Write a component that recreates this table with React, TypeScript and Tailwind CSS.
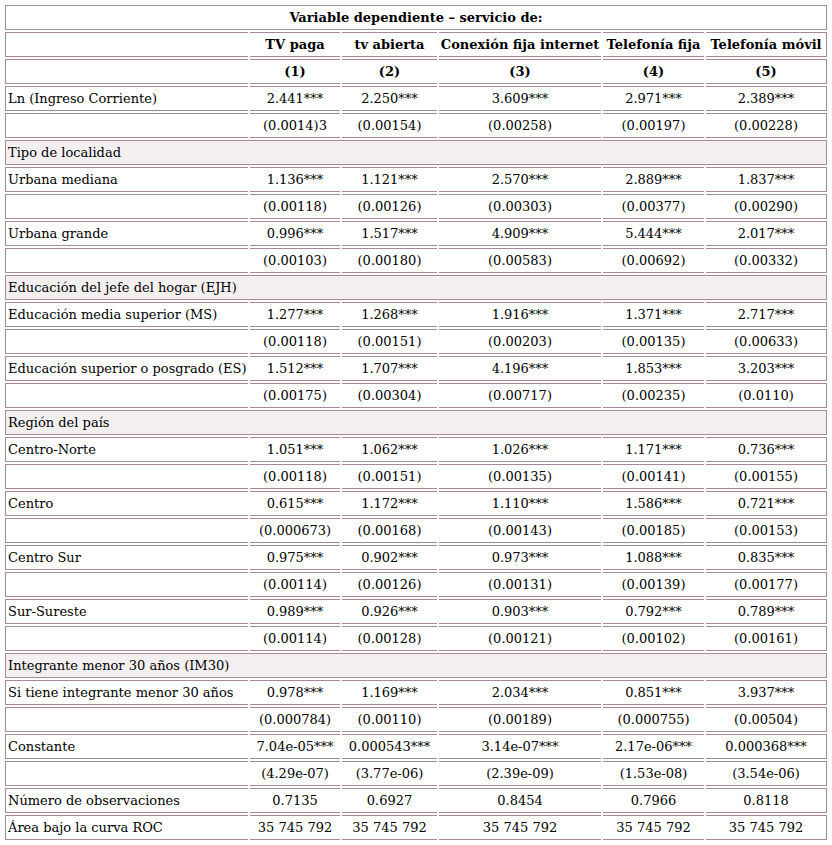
import React from "react";

type Row =
  | { kind: "section"; label: string }
  | { kind: "data"; label: string; values: string[]; bold?: boolean };

const rows: Row[] = [
  { kind: "data", label: "", values: ["TV paga", "tv abierta", "Conexión fija internet", "Telefonía fija", "Telefonía móvil"], bold: true },
  { kind: "data", label: "", values: ["(1)", "(2)", "(3)", "(4)", "(5)"], bold: true },
  { kind: "data", label: "Ln (Ingreso Corriente)", values: ["2.441***", "2.250***", "3.609***", "2.971***", "2.389***"] },
  { kind: "data", label: "", values: ["(0.0014)3", "(0.00154)", "(0.00258)", "(0.00197)", "(0.00228)"] },
  { kind: "section", label: "Tipo de localidad" },
  { kind: "data", label: "Urbana mediana", values: ["1.136***", "1.121***", "2.570***", "2.889***", "1.837***"] },
  { kind: "data", label: "", values: ["(0.00118)", "(0.00126)", "(0.00303)", "(0.00377)", "(0.00290)"] },
  { kind: "data", label: "Urbana grande", values: ["0.996***", "1.517***", "4.909***", "5.444***", "2.017***"] },
  { kind: "data", label: "", values: ["(0.00103)", "(0.00180)", "(0.00583)", "(0.00692)", "(0.00332)"] },
  { kind: "section", label: "Educación del jefe del hogar (EJH)" },
  { kind: "data", label: "Educación media superior (MS)", values: ["1.277***", "1.268***", "1.916***", "1.371***", "2.717***"] },
  { kind: "data", label: "", values: ["(0.00118)", "(0.00151)", "(0.00203)", "(0.00135)", "(0.00633)"] },
  { kind: "data", label: "Educación superior o posgrado (ES)", values: ["1.512***", "1.707***", "4.196***", "1.853***", "3.203***"] },
  { kind: "data", label: "", values: ["(0.00175)", "(0.00304)", "(0.00717)", "(0.00235)", "(0.0110)"] },
  { kind: "section", label: "Región del país" },
  { kind: "data", label: "Centro-Norte", values: ["1.051***", "1.062***", "1.026***", "1.171***", "0.736***"] },
  { kind: "data", label: "", values: ["(0.00118)", "(0.00151)", "(0.00135)", "(0.00141)", "(0.00155)"] },
  { kind: "data", label: "Centro", values: ["0.615***", "1.172***", "1.110***", "1.586***", "0.721***"] },
  { kind: "data", label: "", values: ["(0.000673)", "(0.00168)", "(0.00143)", "(0.00185)", "(0.00153)"] },
  { kind: "data", label: "Centro Sur", values: ["0.975***", "0.902***", "0.973***", "1.088***", "0.835***"] },
  { kind: "data", label: "", values: ["(0.00114)", "(0.00126)", "(0.00131)", "(0.00139)", "(0.00177)"] },
  { kind: "data", label: "Sur-Sureste", values: ["0.989***", "0.926***", "0.903***", "0.792***", "0.789***"] },
  { kind: "data", label: "", values: ["(0.00114)", "(0.00128)", "(0.00121)", "(0.00102)", "(0.00161)"] },
  { kind: "section", label: "Integrante menor 30 años (IM30)" },
  { kind: "data", label: "Si tiene integrante menor 30 años", values: ["0.978***", "1.169***", "2.034***", "0.851***", "3.937***"] },
  { kind: "data", label: "", values: ["(0.000784)", "(0.00110)", "(0.00189)", "(0.000755)", "(0.00504)"] },
  { kind: "data", label: "Constante", values: ["7.04e-05***", "0.000543***", "3.14e-07***", "2.17e-06***", "0.000368***"] },
  { kind: "data", label: "", values: ["(4.29e-07)", "(3.77e-06)", "(2.39e-09)", "(1.53e-08)", "(3.54e-06)"] },
  { kind: "data", label: "Número de observaciones", values: ["0.7135", "0.6927", "0.8454", "0.7966", "0.8118"] },
  { kind: "data", label: "Área bajo la curva ROC", values: ["35 745 792", "35 745 792", "35 745 792", "35 745 792", "35 745 792"] },
];

const cell = "border-y border-[#a8899b] p-0 pt-[1px] h-[25px] leading-[22px] whitespace-nowrap";

export default function App() {
  return (
    <div className="bg-white w-[832px] h-[845px] pl-[3px] pt-[3px] text-black text-[13px] [font-family:'DejaVu_Serif',serif]">
      <table className="table-fixed border-separate border-spacing-[2px] w-[826px]">
        <colgroup>
          <col className="w-[243px]" />
          <col className="w-[90px]" />
          <col className="w-[95px]" />
          <col className="w-[162px]" />
          <col className="w-[101px]" />
          <col className="w-[121px]" />
        </colgroup>
        <tbody>
          <tr>
            <td colSpan={6} className={`${cell} border-x text-center font-bold`}>
              Variable dependiente – servicio de:
            </td>
          </tr>
          {rows.map((r, i) =>
            r.kind === "section" ? (
              <tr key={i}>
                <td colSpan={6} className={`${cell} border-x bg-[#f4f0f2] pl-[2px]`}>
                  {r.label}
                </td>
              </tr>
            ) : (
              <tr key={i}>
                <td className={`${cell} border-l pl-[2px]`}>{r.label}</td>
                {r.values.map((v, j) => (
                  <td
                    key={j}
                    className={`${cell} text-center ${j === 4 ? "border-r" : ""} ${r.bold ? "font-bold" : ""}`}
                  >
                    {v}
                  </td>
                ))}
              </tr>
            )
          )}
        </tbody>
      </table>
    </div>
  );
}
